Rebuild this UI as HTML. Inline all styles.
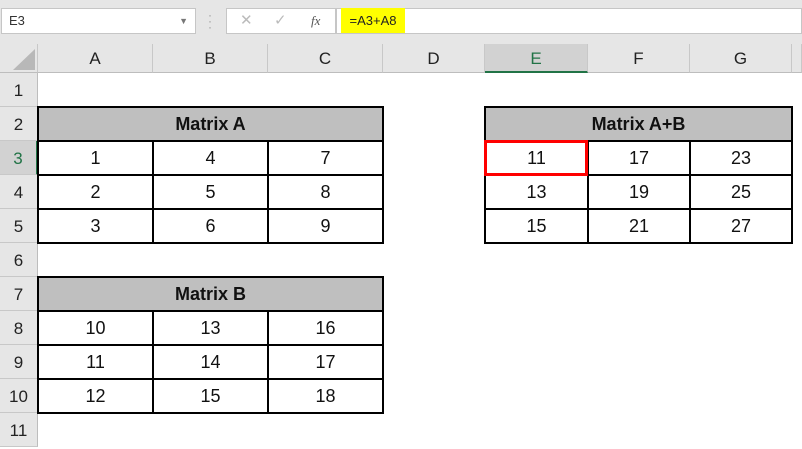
<!DOCTYPE html>
<html><head><style>
body{margin:0;width:802px;height:422px;overflow:hidden;background:#fff;font-family:"Liberation Sans",sans-serif;position:relative}
.a{position:absolute}
.tb{left:0;top:0;width:802px;height:44px;background:#e6e6e6}
.box{background:#fff;border:1px solid #c6c6c6;box-sizing:border-box}
.ch{top:44px;height:29px;background:#e6e6e6;border-right:1px solid #c8c8c8;border-bottom:1px solid #bdbdbd;box-sizing:border-box;text-align:center;line-height:30px;font-size:17px;color:#222}
.rh{left:0;width:38px;height:34px;background:#e6e6e6;border-bottom:1px solid #c8c8c8;border-right:1px solid #bdbdbd;box-sizing:border-box;text-align:center;line-height:36px;font-size:17px;color:#222}
.c{position:absolute;height:34px;line-height:35px;text-align:center;font-size:18px;color:#111}
.hd{position:absolute;height:34px;line-height:35px;text-align:center;font-size:18px;font-weight:bold;background:#bfbfbf;color:#111}
.h{position:absolute;height:2px;background:#000}
.v{position:absolute;width:2px;background:#000}
</style></head><body>
<div class="a tb"></div>
<div class="a box" style="left:1px;top:8px;width:195px;height:26px;font-size:13px;line-height:24px;padding-left:7px;color:#333">E3<span style="position:absolute;right:7px;top:0;font-size:9px;color:#777">▼</span></div>
<div class="a" style="left:208px;top:12px;font-size:12px;color:#999;line-height:6px">·<br>·<br>·</div>
<div class="a box" style="left:226px;top:8px;width:110px;height:26px;color:#bbb;font-size:15px;line-height:24px"><span style="position:absolute;left:13px">✕</span><span style="position:absolute;left:47px">✓</span><span style="position:absolute;left:84px;color:#555;font-style:italic;font-family:'Liberation Serif',serif;font-size:13px">fx</span></div>
<div class="a box" style="left:336px;top:8px;width:466px;height:26px"></div>
<div class="a" style="left:341px;top:8px;width:64px;height:25px;background:#ffff00;font-size:13px;line-height:25px;text-align:center;color:#222">=A3+A8</div>
<div class="a ch" style="left:0;width:38px"><svg width="36" height="28" style="position:absolute;left:0;top:0"><polygon points="35,5 35,26 13,26" fill="#b8b8b8"/></svg></div>
<div class="a ch" style="left:38px;width:115px">A</div>
<div class="a ch" style="left:153px;width:115px">B</div>
<div class="a ch" style="left:268px;width:115px">C</div>
<div class="a ch" style="left:383px;width:102px">D</div>
<div class="a ch" style="left:485px;width:103px;background:#d2d2d2;border-bottom:2px solid #217346;color:#217346">E</div>
<div class="a ch" style="left:588px;width:102px">F</div>
<div class="a ch" style="left:690px;width:102px">G</div>
<div class="a ch" style="left:792px;width:10px"></div>
<div class="a rh" style="top:73px">1</div>
<div class="a rh" style="top:107px">2</div>
<div class="a rh" style="top:141px;background:#d2d2d2;border-right:2px solid #217346;color:#217346">3</div>
<div class="a rh" style="top:175px">4</div>
<div class="a rh" style="top:209px">5</div>
<div class="a rh" style="top:243px">6</div>
<div class="a rh" style="top:277px">7</div>
<div class="a rh" style="top:311px">8</div>
<div class="a rh" style="top:345px">9</div>
<div class="a rh" style="top:379px">10</div>
<div class="a rh" style="top:413px">11</div>

<div class="hd" style="left:38px;top:107px;width:345px">Matrix A</div>
<div class="c" style="left:38px;top:141px;width:115px">1</div><div class="c" style="left:153px;top:141px;width:115px">4</div><div class="c" style="left:268px;top:141px;width:115px">7</div>
<div class="c" style="left:38px;top:175px;width:115px">2</div><div class="c" style="left:153px;top:175px;width:115px">5</div><div class="c" style="left:268px;top:175px;width:115px">8</div>
<div class="c" style="left:38px;top:209px;width:115px">3</div><div class="c" style="left:153px;top:209px;width:115px">6</div><div class="c" style="left:268px;top:209px;width:115px">9</div>
<div class="h" style="left:38px;top:106px;width:346px"></div><div class="h" style="left:38px;top:140px;width:346px"></div><div class="h" style="left:38px;top:174px;width:346px"></div><div class="h" style="left:38px;top:208px;width:346px"></div><div class="h" style="left:38px;top:242px;width:346px"></div>
<div class="v" style="left:37px;top:106px;height:138px"></div><div class="v" style="left:382px;top:106px;height:138px"></div><div class="v" style="left:152px;top:140px;height:104px"></div><div class="v" style="left:267px;top:140px;height:104px"></div>

<div class="hd" style="left:38px;top:277px;width:345px">Matrix B</div>
<div class="c" style="left:38px;top:311px;width:115px">10</div><div class="c" style="left:153px;top:311px;width:115px">13</div><div class="c" style="left:268px;top:311px;width:115px">16</div>
<div class="c" style="left:38px;top:345px;width:115px">11</div><div class="c" style="left:153px;top:345px;width:115px">14</div><div class="c" style="left:268px;top:345px;width:115px">17</div>
<div class="c" style="left:38px;top:379px;width:115px">12</div><div class="c" style="left:153px;top:379px;width:115px">15</div><div class="c" style="left:268px;top:379px;width:115px">18</div>
<div class="h" style="left:38px;top:276px;width:346px"></div><div class="h" style="left:38px;top:310px;width:346px"></div><div class="h" style="left:38px;top:344px;width:346px"></div><div class="h" style="left:38px;top:378px;width:346px"></div><div class="h" style="left:38px;top:412px;width:346px"></div>
<div class="v" style="left:37px;top:276px;height:138px"></div><div class="v" style="left:382px;top:276px;height:138px"></div><div class="v" style="left:152px;top:310px;height:104px"></div><div class="v" style="left:267px;top:310px;height:104px"></div>

<div class="hd" style="left:485px;top:107px;width:307px">Matrix A+B</div>
<div class="c" style="left:485px;top:141px;width:103px">11</div><div class="c" style="left:588px;top:141px;width:102px">17</div><div class="c" style="left:690px;top:141px;width:102px">23</div>
<div class="c" style="left:485px;top:175px;width:103px">13</div><div class="c" style="left:588px;top:175px;width:102px">19</div><div class="c" style="left:690px;top:175px;width:102px">25</div>
<div class="c" style="left:485px;top:209px;width:103px">15</div><div class="c" style="left:588px;top:209px;width:102px">21</div><div class="c" style="left:690px;top:209px;width:102px">27</div>
<div class="h" style="left:484px;top:106px;width:309px"></div><div class="h" style="left:484px;top:140px;width:309px"></div><div class="h" style="left:484px;top:174px;width:309px"></div><div class="h" style="left:484px;top:208px;width:309px"></div><div class="h" style="left:484px;top:242px;width:309px"></div>
<div class="v" style="left:484px;top:106px;height:138px"></div><div class="v" style="left:791px;top:106px;height:138px"></div><div class="v" style="left:587px;top:140px;height:104px"></div><div class="v" style="left:689px;top:140px;height:104px"></div>
<div class="a" style="left:484px;top:140px;width:98px;height:30px;border:3px solid #f00"></div>
</body></html>
